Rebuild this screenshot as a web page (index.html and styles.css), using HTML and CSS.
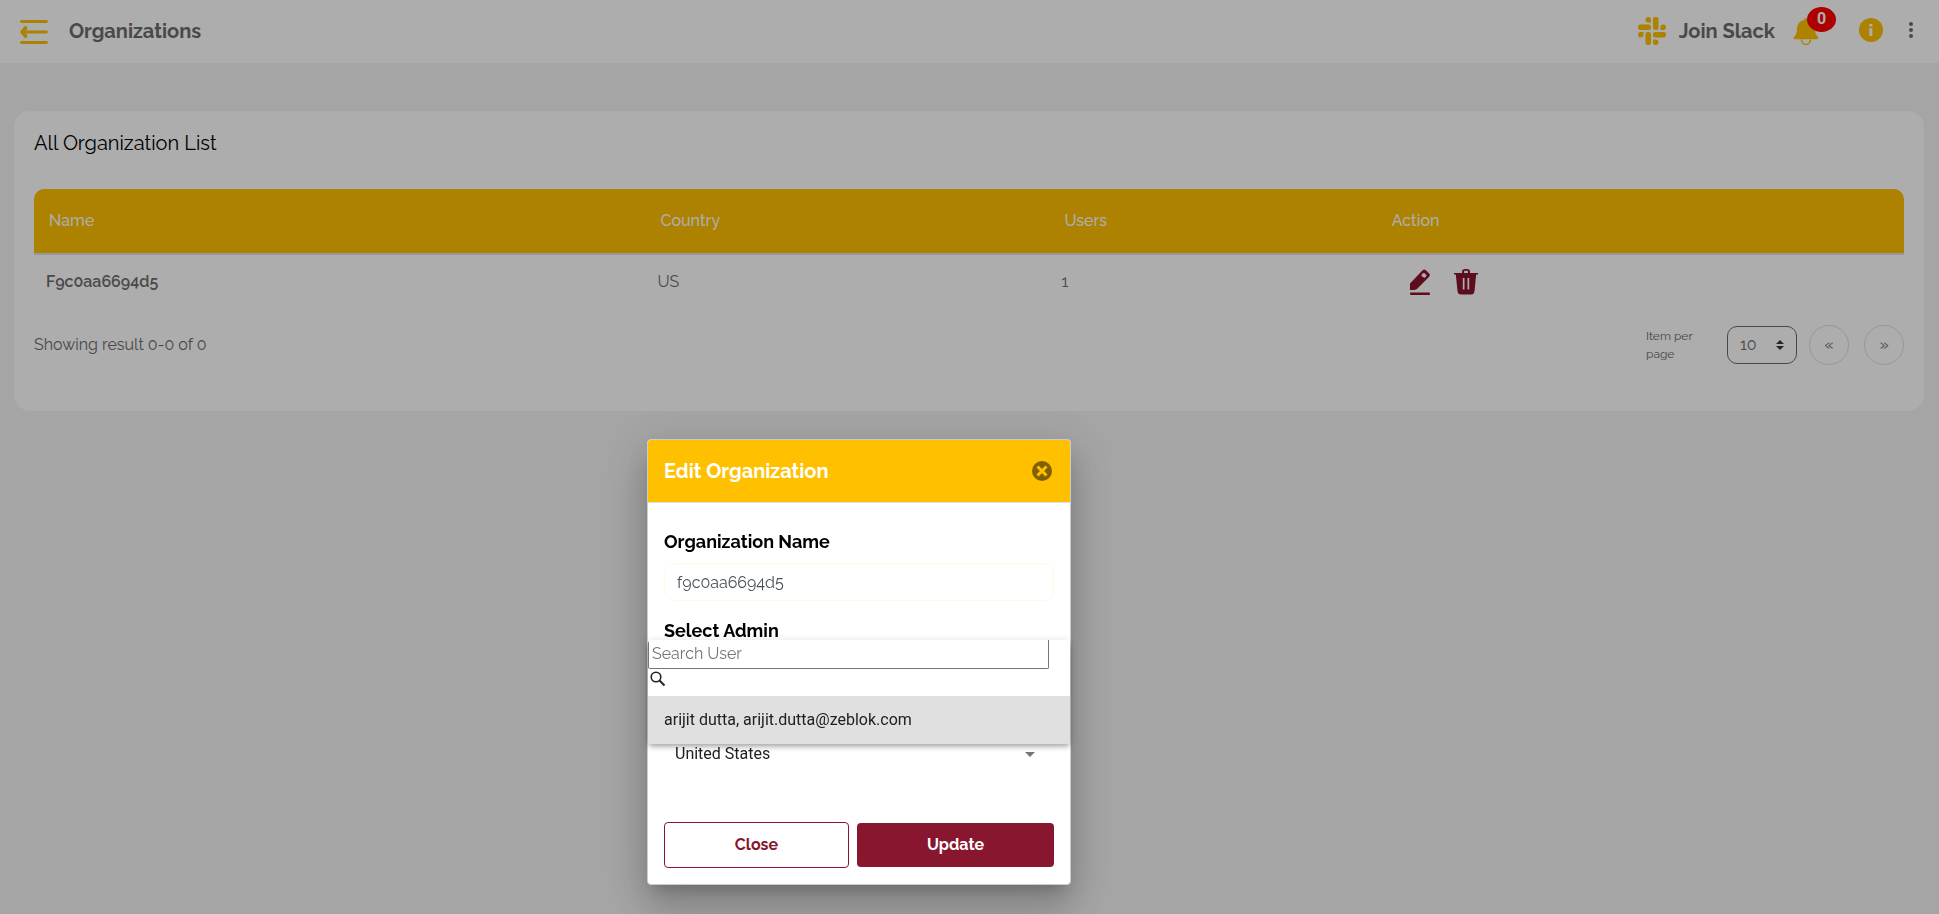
FILE: index.html
```
<!DOCTYPE html>
<html lang="en">
<head>
    <meta charset="utf-8">
    <meta name="viewport" content="width=device-width, initial-scale=1">
    <title>Organizations</title>
    <link rel="stylesheet" href="styles.css">
</head>
<body>
    <header class="topbar">
        <button class="icon-button" aria-label="Toggle menu">
            <svg width="28" height="24" viewBox="0 0 28 24" fill="none" stroke="currentColor" stroke-width="2.800" stroke-linecap="round" stroke-linejoin="round">
                <path d="M1.500 1.500h25M3 12h23.500M1.500 22.500h25"/>
                <path d="M5.500 8L2.200 12l3.300 4" stroke-width="3.600"/>
            </svg>
        </button>
        <h1 class="page-title">Organizations</h1>

        <div class="topbar-right">
            <a href="#" class="slack-link">
                <svg width="28" height="28" viewBox="0 0 28 28" fill="currentColor">
                    <rect x="15" y="0" width="5.500" height="13" rx="2.200"/>
                    <rect x="0" y="7.500" width="13" height="5.500" rx="2.200"/>
                    <rect x="7.500" y="15" width="5.500" height="13" rx="2.200"/>
                    <rect x="15" y="15" width="13" height="5.500" rx="2.200"/>
                    <path d="M13 5.500h-2.700A2.750 2.750 0 1 1 13 2.700zM22.500 13v-2.700A2.750 2.750 0 1 1 25.300 13zM15 22.500h2.700A2.750 2.750 0 1 1 15 25.300zM5.500 15v2.700A2.750 2.750 0 1 1 2.700 15z"/>
                </svg>
                <span>Join Slack</span>
            </a>
            <button class="icon-button bell" aria-label="Notifications">
                <svg width="26" height="28" viewBox="0 0 26 28" fill="currentColor">
                    <path d="M13 0c1.200 0 1.800.8 1.800 1.900 4.500.9 7.200 4.300 7.200 8.800 0 4 .8 6 3 8.200.8.900.4 2.300-.8 2.300H1.800c-1.200 0-1.600-1.400-.8-2.300 2.200-2.200 3-4.200 3-8.200 0-4.500 2.700-7.900 7.200-8.800C11.200.8 11.800 0 13 0z"/>
                    <path d="M8.700 21.500a4.300 5 0 0 0 8.600 0" fill="none" stroke="currentColor" stroke-width="1.500"/>
                </svg>
                <span class="badge">0</span>
            </button>
            <button class="icon-button info" aria-label="Information">
                <svg width="24" height="24" viewBox="0 0 24 24">
                    <circle cx="12" cy="12" r="12" fill="currentColor"/>
                    <path d="M10.400 6h3v2.600h-3zM9.800 10.300h3.600V18h-3v-6.500h-.6z" fill="#fff"/>
                </svg>
            </button>
            <button class="icon-button more" aria-label="More options">
                <svg width="4" height="18" viewBox="0 0 4 18" fill="currentColor">
                    <circle cx="2" cy="3" r="2"/><circle cx="2" cy="9" r="2"/><circle cx="2" cy="15" r="2"/>
                </svg>
            </button>
        </div>
    </header>

    <main class="card">
        <h2 class="card-title">All Organization List</h2>
        <table class="org-table">
            <thead>
                <tr>
                    <th class="col-name">Name</th>
                    <th class="col-country">Country</th>
                    <th class="col-users">Users</th>
                    <th>Action</th>
                </tr>
            </thead>
            <tbody>
                <tr>
                    <td class="org-name">F9c0aa6694d5</td>
                    <td>US</td>
                    <td>1</td>
                    <td>
                        <div class="actions">
                            <button class="icon-button" aria-label="Edit">
                                <svg width="22" height="26" viewBox="0 0 22 26" fill="currentColor">
                                    <path fill-rule="evenodd" d="M1 21v-6.500L13.600 1.200q1.600-1.600 3.300 0l3.200 3.300q1.500 1.600 0 3.200L8 20l-2.500 1zM13.300 4.500L12.400 7l3.200 2 2.200-2.500-2.500-2.500z"/>
                                    <rect x="1" y="23.500" width="20" height="2.500" rx="1"/>
                                </svg>
                            </button>
                            <button class="icon-button" aria-label="Delete">
                                <svg width="24" height="26" viewBox="0 0 24 26" fill="currentColor">
                                    <path fill-rule="evenodd" d="M0 4h8V3q0-3 3-3h2q3 0 3 3v1h8v1.500h-1.800L20.500 22q-.4 3.500-3.500 3.500H7q-3.100 0-3.500-3.500L1.800 5.500H0zM10 4h4V3q0-1.300-1-1.300h-2Q10 1.700 10 3zM8.800 9v11.500h1.700V9zM13.500 9v11.500h1.700V9z"/>
                                </svg>
                            </button>
                        </div>
                    </td>
                </tr>
            </tbody>
        </table>

        <div class="table-footer">
            <span class="result-text">Showing result 0-0 of 0</span>
            <div class="pager">
                <label class="per-page" for="perPage">Item per page</label>
                <select class="page-size" id="perPage">
                    <option>10</option>
                </select>
                <button class="page-button" aria-label="Previous page">«</button>
                <button class="page-button" aria-label="Next page">»</button>
            </div>
        </div>
    </main>

    <div class="overlay">
        <section class="dialog" role="dialog" aria-labelledby="dialogTitle">
            <div class="dialog-head">
                <h2 class="dialog-title" id="dialogTitle">Edit Organization</h2>
                <button class="icon-button dialog-x" aria-label="Close dialog">
                    <svg width="20" height="20" viewBox="0 0 20 20">
                        <circle cx="10" cy="10" r="10" fill="currentColor"/>
                        <path d="M5.500 5.500l9 9M14.500 5.500l-9 9" stroke="#ffc000" stroke-width="3"/>
                    </svg>
                </button>
            </div>
            <form class="dialog-body">
                <label class="field-label" for="orgName">Organization Name</label>
                <input class="field" id="orgName" type="text" value="f9c0aa6694d5">

                <label class="field-label" for="searchUser">Select Admin</label>
                <div class="admin-field">
                    <div class="admin-panel">
                        <input class="search-input" id="searchUser" type="text" placeholder="Search User">
                        <svg class="search-icon" width="16" height="16" viewBox="0 0 16 16" fill="none" stroke="currentColor">
                            <circle cx="6" cy="6" r="4.800" stroke-width="1.600"/>
                            <path d="M9.500 9.500l5 5" stroke-width="2"/>
                        </svg>
                        <button type="button" class="admin-option">arijit dutta, arijit.dutta@zeblok.com</button>
                    </div>
                </div>

                <select class="country-select" aria-label="Country">
                    <option>United States</option>
                </select>

                <div class="dialog-buttons">
                    <button type="button" class="btn btn-outline">Close</button>
                    <button type="button" class="btn btn-primary">Update</button>
                </div>
            </form>
        </section>
    </div>
</body>
</html>
```

FILE: styles.css
```
* {
    box-sizing: border-box;
}

body {
    margin: 0;
    min-height: 100vh;
    background: #f4f4f4;
    color: #6c6c6c;
    font-family: Raleway, Lato, sans-serif;
    font-size: 16px;
    line-height: 24px;
}

h1,
h2 {
    margin: 0;
}

button,
input,
select {
    font: inherit;
    color: inherit;
}

svg {
    display: block;
}

.icon-button {
    padding: 0;
    border: none;
    background: none;
    color: #ffc000;
    cursor: pointer;
}

/* top bar */
.topbar {
    display: flex;
    align-items: center;
    height: 63px;
    padding: 0 26px 0 20px;
    background: #fff;
}

.page-title {
    margin: 0 0 2px 21px;
    font-size: 20px;
    font-weight: 700;
}

.topbar-right {
    display: flex;
    align-items: center;
    margin-left: auto;
}

.slack-link {
    display: flex;
    align-items: center;
    gap: 13px;
    margin-bottom: 2px;
    color: #6c6c6c;
    font-size: 20px;
    font-weight: 700;
    text-decoration: none;
}

.slack-link svg {
    color: #ffc000;
}

.bell {
    position: relative;
    margin-left: 18px;
}

.badge {
    position: absolute;
    top: -11px;
    left: 14px;
    width: 29px;
    height: 25px;
    border-radius: 50%;
    background: #f00;
    color: #fff;
    font-family: Roboto, sans-serif;
    font-size: 16px;
    font-weight: 700;
}

.info {
    margin: 0 26px 4px 40px;
}

.more {
    margin-bottom: 4px;
    color: #6c6c6c;
}

/* organization list */
.card {
    margin: 48px 15px 0 14px;
    padding: 20px 20px 46px;
    border-radius: 16px;
    background: #fff;
}

.card-title {
    margin-bottom: 34px;
    color: #000;
    font-size: 20px;
    font-weight: 400;
}

.org-table {
    width: 100%;
    border-collapse: separate;
    border-spacing: 0;
    table-layout: fixed;
}

.org-table th {
    height: 66px;
    padding: 0 15px;
    border-bottom: 2px solid #dee2e6;
    background: #ffc000;
    color: #fff;
    font-weight: 500;
    text-align: left;
}

.org-table th:first-child {
    border-top-left-radius: 10px;
}

.org-table th:last-child {
    border-top-right-radius: 10px;
}

.org-table td {
    height: 54px;
    padding: 0 12px;
}

.org-table .org-name {
    font-weight: 600;
}

.col-name {
    width: 32.7%;
}

.col-country {
    width: 21.6%;
}

.col-users {
    width: 17.5%;
}

.actions {
    display: flex;
    gap: 23px;
    padding-left: 20px;
}

.actions .icon-button {
    color: #88162f;
}

.table-footer {
    display: flex;
    align-items: center;
    justify-content: space-between;
    margin-top: 16px;
}

.pager {
    display: flex;
    align-items: center;
}

.per-page {
    width: 60px;
    margin-right: 21px;
    font-size: 12px;
    line-height: 18px;
}

.page-size {
    width: 70px;
    height: 38px;
    margin-right: 12px;
    padding: 0 12px;
    border: 1px solid #6c6c6c;
    border-radius: 10px;
    appearance: none;
    background: url("data:image/svg+xml,%3Csvg xmlns='http://www.w3.org/2000/svg' viewBox='0 0 8 10'%3E%3Cpath fill='%23343a40' d='M4 0L0 4h8zM4 10L0 6h8z'/%3E%3C/svg%3E") right 12px center / 8px 10px no-repeat;
}

.page-button {
    width: 40px;
    height: 40px;
    padding: 0;
    border: 1px solid #dedede;
    border-radius: 50%;
    background: none;
}

.page-button + .page-button {
    margin-left: 15px;
}

/* edit dialog */
.overlay {
    position: fixed;
    inset: 0;
    display: flex;
    align-items: flex-end;
    justify-content: center;
    padding: 0 221px 29px 0;
    background: rgba(0, 0, 0, 0.32);
}

.dialog {
    width: 424px;
    border: 1px solid #ccc;
    border-radius: 4px;
    background: #fff;
    box-shadow: 0 11px 15px -7px rgba(0, 0, 0, 0.2), 0 24px 38px 3px rgba(0, 0, 0, 0.14), 0 9px 46px 8px rgba(0, 0, 0, 0.12);
}

.dialog-head {
    display: flex;
    align-items: center;
    justify-content: space-between;
    height: 63px;
    padding: 0 18px 0 16px;
    border-bottom: 1px solid #dee2e6;
    border-radius: 3px 3px 0 0;
    background: #ffc000;
}

.dialog-title {
    color: #fff;
    font-size: 20px;
    font-weight: 700;
}

.dialog-x {
    color: #806000;
}

.dialog-body {
    padding: 27px 16px 16px;
}

.field-label {
    display: block;
    color: #000;
    font-size: 18px;
    font-weight: 700;
}

.field {
    width: 100%;
    height: 38px;
    margin: 9px 0 18px;
    padding: 0 12px;
    border: 1px solid #fff9e6;
    border-radius: 10px;
    background: #fff;
    color: #495057;
}

.admin-field {
    position: relative;
    height: 92px;
}

/* opens over the field and covers the full width of the dialog */
.admin-panel {
    position: absolute;
    top: -3px;
    left: -16px;
    right: -16px;
    overflow: hidden;
    border-radius: 4px;
    background: #fff;
    box-shadow: 0 2px 4px -1px rgba(0, 0, 0, 0.2), 0 4px 5px 0 rgba(0, 0, 0, 0.14), 0 1px 10px 0 rgba(0, 0, 0, 0.12);
}

.search-input {
    display: block;
    width: 95%;
    height: 29px;
    padding: 0 3px 2px;
    border: 1px solid #767676;
    border-top: none;
    border-radius: 0 0 2px 2px;
    outline: none;
}

.search-input::placeholder {
    color: #757575;
}

.search-icon {
    margin: 2px 2px 9px;
    color: #212529;
}

.admin-option {
    display: block;
    width: 100%;
    height: 48px;
    padding: 0 16px;
    border: none;
    background: #e0e0e0;
    color: #212121;
    font-family: Roboto, sans-serif;
    text-align: left;
}

.country-select {
    display: block;
    width: 100%;
    height: 38px;
    padding: 0 11px;
    border: none;
    appearance: none;
    background: url("data:image/svg+xml,%3Csvg xmlns='http://www.w3.org/2000/svg' viewBox='0 0 10 5'%3E%3Cpath fill='%23757575' d='M0 0h10L5 5z'/%3E%3C/svg%3E") right 19px center / 10px 5px no-repeat;
    color: #212121;
    font-family: Roboto, sans-serif;
}

.dialog-buttons {
    display: flex;
    align-items: center;
    gap: 8px;
    margin-top: 49px;
}

.btn {
    flex: 14;
    height: 44px;
    padding: 0;
    border: none;
    border-radius: 4px;
    font-weight: 700;
    cursor: pointer;
}

.btn-outline {
    flex: 13;
    height: 46px;
    border: 1px solid #88162f;
    background: #fff;
    color: #88162f;
}

.btn-primary {
    background: #88162f;
    color: #fff;
}
```
